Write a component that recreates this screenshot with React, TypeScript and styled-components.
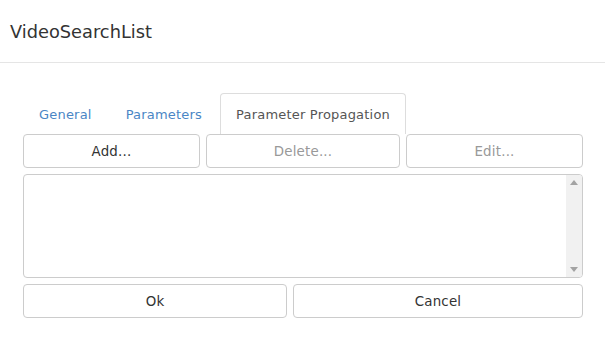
import React from 'react';
import styled, { createGlobalStyle } from 'styled-components';

const GlobalStyle = createGlobalStyle`
  html, body {
    margin: 0;
    padding: 0;
    background: #fff;
    font-family: "DejaVu Sans", Verdana, sans-serif;
    color: #333;
  }
`;

const Header = styled.div`
  height: 63px;
  border-bottom: 1px solid #e5e5e5;
  display: flex;
  align-items: center;
  padding-left: 10px;
  box-sizing: border-box;
`;

const Title = styled.h4`
  margin: 0;
  font-size: 17.8px;
  font-weight: normal;
  color: #333;
`;

const Body = styled.div`
  padding: 30px 22px 0 23px;
`;

const TabList = styled.ul`
  list-style: none;
  margin: 0;
  padding: 0;
  display: flex;
  gap: 2px;
`;

const Tab = styled.li<{ $active?: boolean }>`
  height: 41px;
  box-sizing: border-box;
  padding: 0 15px;
  display: flex;
  align-items: center;
  font-size: 13px;
  letter-spacing: 0.2px;
  border: 1px solid ${p => (p.$active ? '#ddd' : 'transparent')};
  border-bottom: none;
  border-radius: 4px 4px 0 0;
  color: ${p => (p.$active ? '#555' : '#4a86c5')};
  background: #fff;
`;

const ButtonRow = styled.div<{ $cols: string }>`
  display: grid;
  grid-template-columns: ${p => p.$cols};
  gap: 6px;
`;

const Button = styled.button<{ $disabled?: boolean }>`
  height: 34px;
  box-sizing: border-box;
  border: 1px solid #ccc;
  border-radius: 4px;
  background: #fff;
  font-family: inherit;
  font-size: 13.4px;
  letter-spacing: 0.2px;
  color: ${p => (p.$disabled ? '#999' : '#333')};
  cursor: ${p => (p.$disabled ? 'default' : 'pointer')};
  padding: 0;
`;

const ListBox = styled.div`
  margin: 6px 0;
  height: 104px;
  box-sizing: border-box;
  border: 1px solid #ccc;
  border-radius: 4px;
  display: flex;
  justify-content: flex-end;
  overflow: hidden;
`;

const ScrollTrack = styled.div`
  width: 16px;
  background: #f1f1f1;
  display: flex;
  flex-direction: column;
  justify-content: space-between;
  align-items: center;
  padding: 5px 0;
`;

const Arrow = ({ up }: { up?: boolean }) => (
  <svg width="8" height="5" viewBox="0 0 8 5">
    <path d={up ? 'M0 5 L4 0 L8 5 Z' : 'M0 0 L4 5 L8 0 Z'} fill="#a3a3a3" />
  </svg>
);

export default function App() {
  return (
    <>
      <GlobalStyle />
      <Header>
        <Title>VideoSearchList</Title>
      </Header>
      <Body>
        <TabList>
          <Tab>General</Tab>
          <Tab>Parameters</Tab>
          <Tab $active>Parameter Propagation</Tab>
        </TabList>
        <ButtonRow $cols="177px 194px 1fr">
          <Button>Add...</Button>
          <Button $disabled>Delete...</Button>
          <Button $disabled>Edit...</Button>
        </ButtonRow>
        <ListBox>
          <ScrollTrack>
            <Arrow up />
            <Arrow />
          </ScrollTrack>
        </ListBox>
        <ButtonRow $cols="264px 1fr">
          <Button>Ok</Button>
          <Button>Cancel</Button>
        </ButtonRow>
      </Body>
    </>
  );
}
